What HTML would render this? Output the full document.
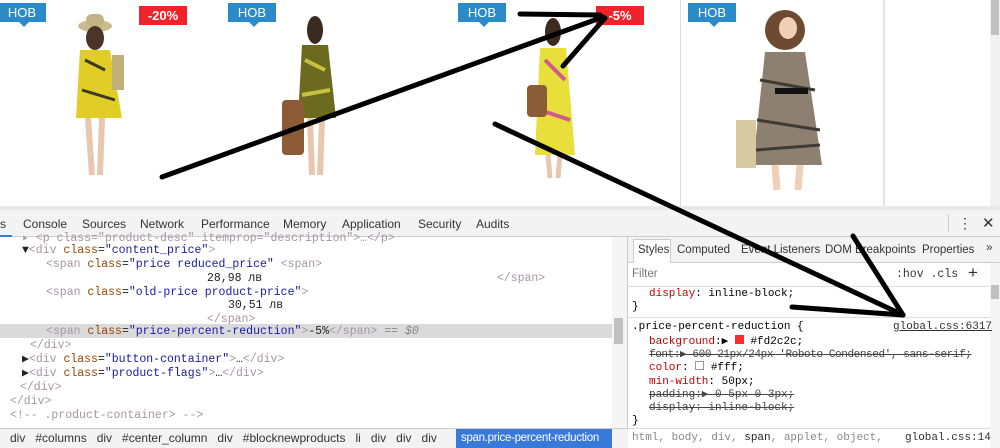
<!DOCTYPE html>
<html><head><meta charset="utf-8"><style>
*{margin:0;padding:0;box-sizing:border-box}
body{width:1000px;height:448px;overflow:hidden;background:#fff;font-family:"Liberation Sans",sans-serif;position:relative}
.abs{position:absolute}
.hob{position:absolute;background:#2b8bc9;color:#fff;font-size:13px;width:48px;height:19px;line-height:19px;text-align:center;top:3px}
.hob:after{content:"";position:absolute;left:21px;bottom:-5px;border:5px solid transparent;border-bottom:0;border-top-color:#2b8bc9}
.red{position:absolute;background:#f0232b;color:#fff;font-weight:bold;font-size:13px;height:19px;line-height:19px;text-align:center;top:6px}
.mono{font-family:"Liberation Mono",monospace;font-size:11.5px;white-space:pre;color:#222}
.tag{color:#a894a6}.an{color:#994500}.av{color:#1a1aa6}
.ln{position:absolute;left:0;height:14px;line-height:14px}
.tabs span{position:absolute;top:7px;font-size:12px;color:#333;white-space:nowrap}
.rt span{font-size:11.5px}
.css{font-family:"Liberation Mono",monospace;font-size:11px;white-space:pre;position:absolute;line-height:14px}
.p{color:#c80000}.s{text-decoration:line-through;color:#444}
</style></head><body>
<div class="abs" style="left:680px;top:0;width:1px;height:208px;background:#ddd"></div>
<div class="abs" style="left:883px;top:0;width:2px;height:208px;background:#e4e4e4"></div>
<div class="abs" style="left:990px;top:0;width:10px;height:208px;background:#f1f1f1"></div>
<div class="abs" style="left:991px;top:0;width:8px;height:35px;background:#c1c1c1"></div>
<div class="abs" style="left:0;top:206px;width:1000px;height:4px;background:#e8e8e8"></div>
<div class="hob" style="left:-2px">НОВ</div>
<div class="hob" style="left:228px">НОВ</div>
<div class="hob" style="left:458px">НОВ</div>
<div class="hob" style="left:688px">НОВ</div>
<div class="red" style="left:139px;width:48px">-20%</div>
<div class="red" style="left:596px;width:48px">-5%</div>
<svg class="abs" style="left:0;top:0" width="1000" height="210">
<ellipse cx="95" cy="26" rx="17" ry="6" fill="#c9bb8f"/><rect x="86" y="14" width="18" height="12" rx="6" fill="#c2b385"/>
<ellipse cx="95" cy="38" rx="9" ry="12" fill="#4a3526"/>
<path d="M80 50 L110 50 L122 118 L76 118 Z" fill="#e1cc28"/><path d="M85 60 L105 70 M82 90 L115 100" stroke="#3a3a20" stroke-width="3"/>
<rect x="112" y="55" width="12" height="35" fill="#bfb07a"/>
<path d="M88 118 L92 175 M102 118 L100 175" stroke="#e8c7ad" stroke-width="6"/>
<ellipse cx="315" cy="30" rx="8" ry="14" fill="#3b2a1e"/>
<path d="M302 45 L328 45 L336 118 L298 118 Z" fill="#6b6a1e"/><path d="M305 60 L325 70 M302 95 L330 90" stroke="#c8c040" stroke-width="4"/>
<rect x="282" y="100" width="22" height="55" rx="4" fill="#8c5c36"/>
<path d="M310 118 L312 175 M322 118 L320 175" stroke="#e8c7ad" stroke-width="6"/>
<ellipse cx="553" cy="32" rx="8" ry="14" fill="#3b2a1e"/>
<path d="M540 48 L566 48 L575 155 L535 155 Z" fill="#e8df3a"/><path d="M545 60 L565 80 M540 110 L570 120" stroke="#d05a8a" stroke-width="4"/>
<rect x="527" y="85" width="20" height="32" rx="4" fill="#8c5c36"/>
<path d="M548 155 L550 178 M560 155 L558 178" stroke="#e8c7ad" stroke-width="5"/>
<ellipse cx="785" cy="30" rx="20" ry="20" fill="#6e4a30"/><ellipse cx="788" cy="28" rx="9" ry="11" fill="#efcfb5"/>
<path d="M765 52 L805 52 L822 165 L753 165 Z" fill="#8d8070"/><path d="M760 80 L815 90 M757 120 L820 130 M756 150 L820 145" stroke="#3e3a34" stroke-width="3"/>
<rect x="775" y="88" width="33" height="6" fill="#111"/>
<rect x="736" y="120" width="20" height="48" fill="#d9c9a3"/>
<path d="M775 165 L777 190 M800 165 L798 190" stroke="#efcfb5" stroke-width="7"/>
</svg>
<div class="abs" style="left:0;top:210px;width:1000px;height:27px;background:#f3f3f3;border-bottom:1px solid #ccc"></div>
<div class="tabs">
<span style="left:0;top:217px">s</span><span style="left:23px;top:217px">Console</span><span style="left:82px;top:217px">Sources</span><span style="left:140px;top:217px">Network</span><span style="left:201px;top:217px">Performance</span><span style="left:283px;top:217px">Memory</span><span style="left:342px;top:217px">Application</span><span style="left:418px;top:217px">Security</span><span style="left:476px;top:217px">Audits</span>
<span style="left:958px;top:215px;font-size:14px">⋮</span><span style="left:982px;top:214px;font-size:15px">✕</span>
</div>
<div class="abs" style="left:0;top:235px;width:12px;height:2px;background:#3879d9"></div>
<div class="abs" style="left:948px;top:214px;width:1px;height:18px;background:#ccc"></div>
<div class="abs" style="left:0;top:324px;width:612px;height:14px;background:#dadada"></div>
<div class="abs" style="left:612px;top:237px;width:15px;height:191px;background:#f5f5f5"></div>
<div class="abs" style="left:614px;top:318px;width:9px;height:26px;background:#c1c1c1"></div>
<div class="abs" style="left:627px;top:237px;width:1px;height:211px;background:#ccc"></div>
<div class="mono" style="position:absolute;left:0;top:230px;width:612px">
<div class="ln" style="top:2px;left:22px"><span class="tag">▸ &lt;p class="product-desc" itemprop="description"&gt;…&lt;/p&gt;</span></div>
<div class="ln" style="top:14px;left:22px">▼<span class="tag">&lt;div </span><span class="an">class</span>=<span class="av">"content_price"</span><span class="tag">&gt;</span></div>
<div class="ln" style="top:28px;left:46px"><span class="tag">&lt;span </span><span class="an">class</span>=<span class="av">"price reduced_price"</span> <span class="tag">&lt;span&gt;</span></div>
<div class="ln" style="top:42px;left:207px">28,98 лв                                  <span class="tag">&lt;/span&gt;</span></div>
<div class="ln" style="top:56px;left:46px"><span class="tag">&lt;span </span><span class="an">class</span>=<span class="av">"old-price product-price"</span><span class="tag">&gt;</span></div>
<div class="ln" style="top:69px;left:228px">30,51 лв</div>
<div class="ln" style="top:83px;left:207px"><span class="tag">&lt;/span&gt;</span></div>
<div class="ln" style="top:95px;left:46px"><span class="tag">&lt;span </span><span class="an">class</span>=<span class="av">"price-percent-reduction"</span><span class="tag">&gt;</span>-5%<span class="tag">&lt;/span&gt;</span> <span style="color:#888">== <i>$0</i></span></div>
<div class="ln" style="top:109px;left:30px"><span class="tag">&lt;/div&gt;</span></div>
<div class="ln" style="top:123px;left:22px">▶<span class="tag">&lt;div </span><span class="an">class</span>=<span class="av">"button-container"</span><span class="tag">&gt;</span>…<span class="tag">&lt;/div&gt;</span></div>
<div class="ln" style="top:137px;left:22px">▶<span class="tag">&lt;div </span><span class="an">class</span>=<span class="av">"product-flags"</span><span class="tag">&gt;</span>…<span class="tag">&lt;/div&gt;</span></div>
<div class="ln" style="top:151px;left:20px"><span class="tag">&lt;/div&gt;</span></div>
<div class="ln" style="top:165px;left:10px"><span class="tag">&lt;/div&gt;</span></div>
<div class="ln" style="top:179px;left:10px"><span class="tag">&lt;!-- .product-container&gt; --&gt;</span></div>
</div>
<div class="abs" style="left:0;top:428px;width:628px;height:20px;background:#f3f3f3;border-top:1px solid #ccc;font-size:12px;color:#333;white-space:pre;line-height:19px">   div   #columns   div   #center_column   div   #blocknewproducts   li   div   div   div  </div>
<div class="abs" style="left:456px;top:429px;width:156px;height:19px;background:#3879d9;color:#fff;font-size:11.5px;letter-spacing:-0.3px;line-height:19px;padding-left:5px;white-space:nowrap;overflow:hidden">span.price-percent-reduction</div>
<div class="abs" style="left:628px;top:237px;width:372px;height:26px;background:#f3f3f3;border-bottom:1px solid #ccc"></div>
<div class="abs" style="left:633px;top:239px;width:38px;height:24px;background:#fff;border:1px solid #ccc;border-bottom:none"></div>
<div class="tabs rt"><span style="left:638px;top:244px">Styles</span><span style="left:677px;top:244px">Computed</span><span style="left:741px;top:244px">Event Listeners</span><span style="left:825px;top:244px">DOM Breakpoints</span><span style="left:922px;top:244px">Properties</span><span style="left:986px;top:242px">»</span>
<span style="left:632px;top:268px;color:#777">Filter</span><span style="left:896px;top:268px" class="mono">:hov  .cls</span><span style="left:968px;top:263px;font-size:17px">+</span></div>
<div class="abs" style="left:628px;top:286px;width:362px;height:1px;background:#ddd"></div>
<div class="abs" style="left:628px;top:317px;width:362px;height:1px;background:#ddd"></div>
<div class="abs" style="left:628px;top:428px;width:362px;height:1px;background:#ddd"></div>
<div class="abs" style="left:990px;top:263px;width:10px;height:185px;background:#f5f5f5"></div>
<div class="abs" style="left:991px;top:285px;width:8px;height:14px;background:#c1c1c1"></div>
<div class="css" style="left:649px;top:287px"><span class="p">display</span>: inline-block;</div>
<div class="css" style="left:632px;top:300px">}</div>
<div class="css" style="left:632px;top:320px">.price-percent-reduction {</div>
<div class="css" style="left:893px;top:320px;text-decoration:underline;color:#333">global.css:6317</div>
<div class="css" style="left:649px;top:335px"><span class="p">background</span>:▶ <span style="display:inline-block;width:9px;height:9px;background:#fd2c2c"></span> #fd2c2c;</div>
<div class="css s" style="left:649px;top:348px;letter-spacing:-0.4px">font:▶ 600 21px/24px 'Roboto Condensed', sans-serif;</div>
<div class="css" style="left:649px;top:361px"><span class="p">color</span>: <span style="display:inline-block;width:9px;height:9px;border:1px solid #999;background:#fff"></span> #fff;</div>
<div class="css" style="left:649px;top:375px"><span class="p">min-width</span>: 50px;</div>
<div class="css s" style="left:649px;top:388px">padding:▶ 0 5px 0 3px;</div>
<div class="css s" style="left:649px;top:401px">display: inline-block;</div>
<div class="css" style="left:632px;top:414px">}</div>
<div class="css" style="left:632px;top:431px;color:#888">html, body, div, <span style="color:#222">span</span>, applet, object,</div>
<div class="css" style="left:905px;top:431px;color:#333">global.css:14</div>
<svg class="abs" style="left:0;top:0" width="1000" height="448">
<g stroke="#000" stroke-width="5" stroke-linecap="round" fill="none">
<path d="M162 177 L603 17"/><path d="M520 14 L600 15"/><path d="M563 66 L605 18"/>
<path d="M495 124 L903 315"/><path d="M853 236 L903 315"/><path d="M792 307 L903 315"/>
</g></svg>
</body></html>
